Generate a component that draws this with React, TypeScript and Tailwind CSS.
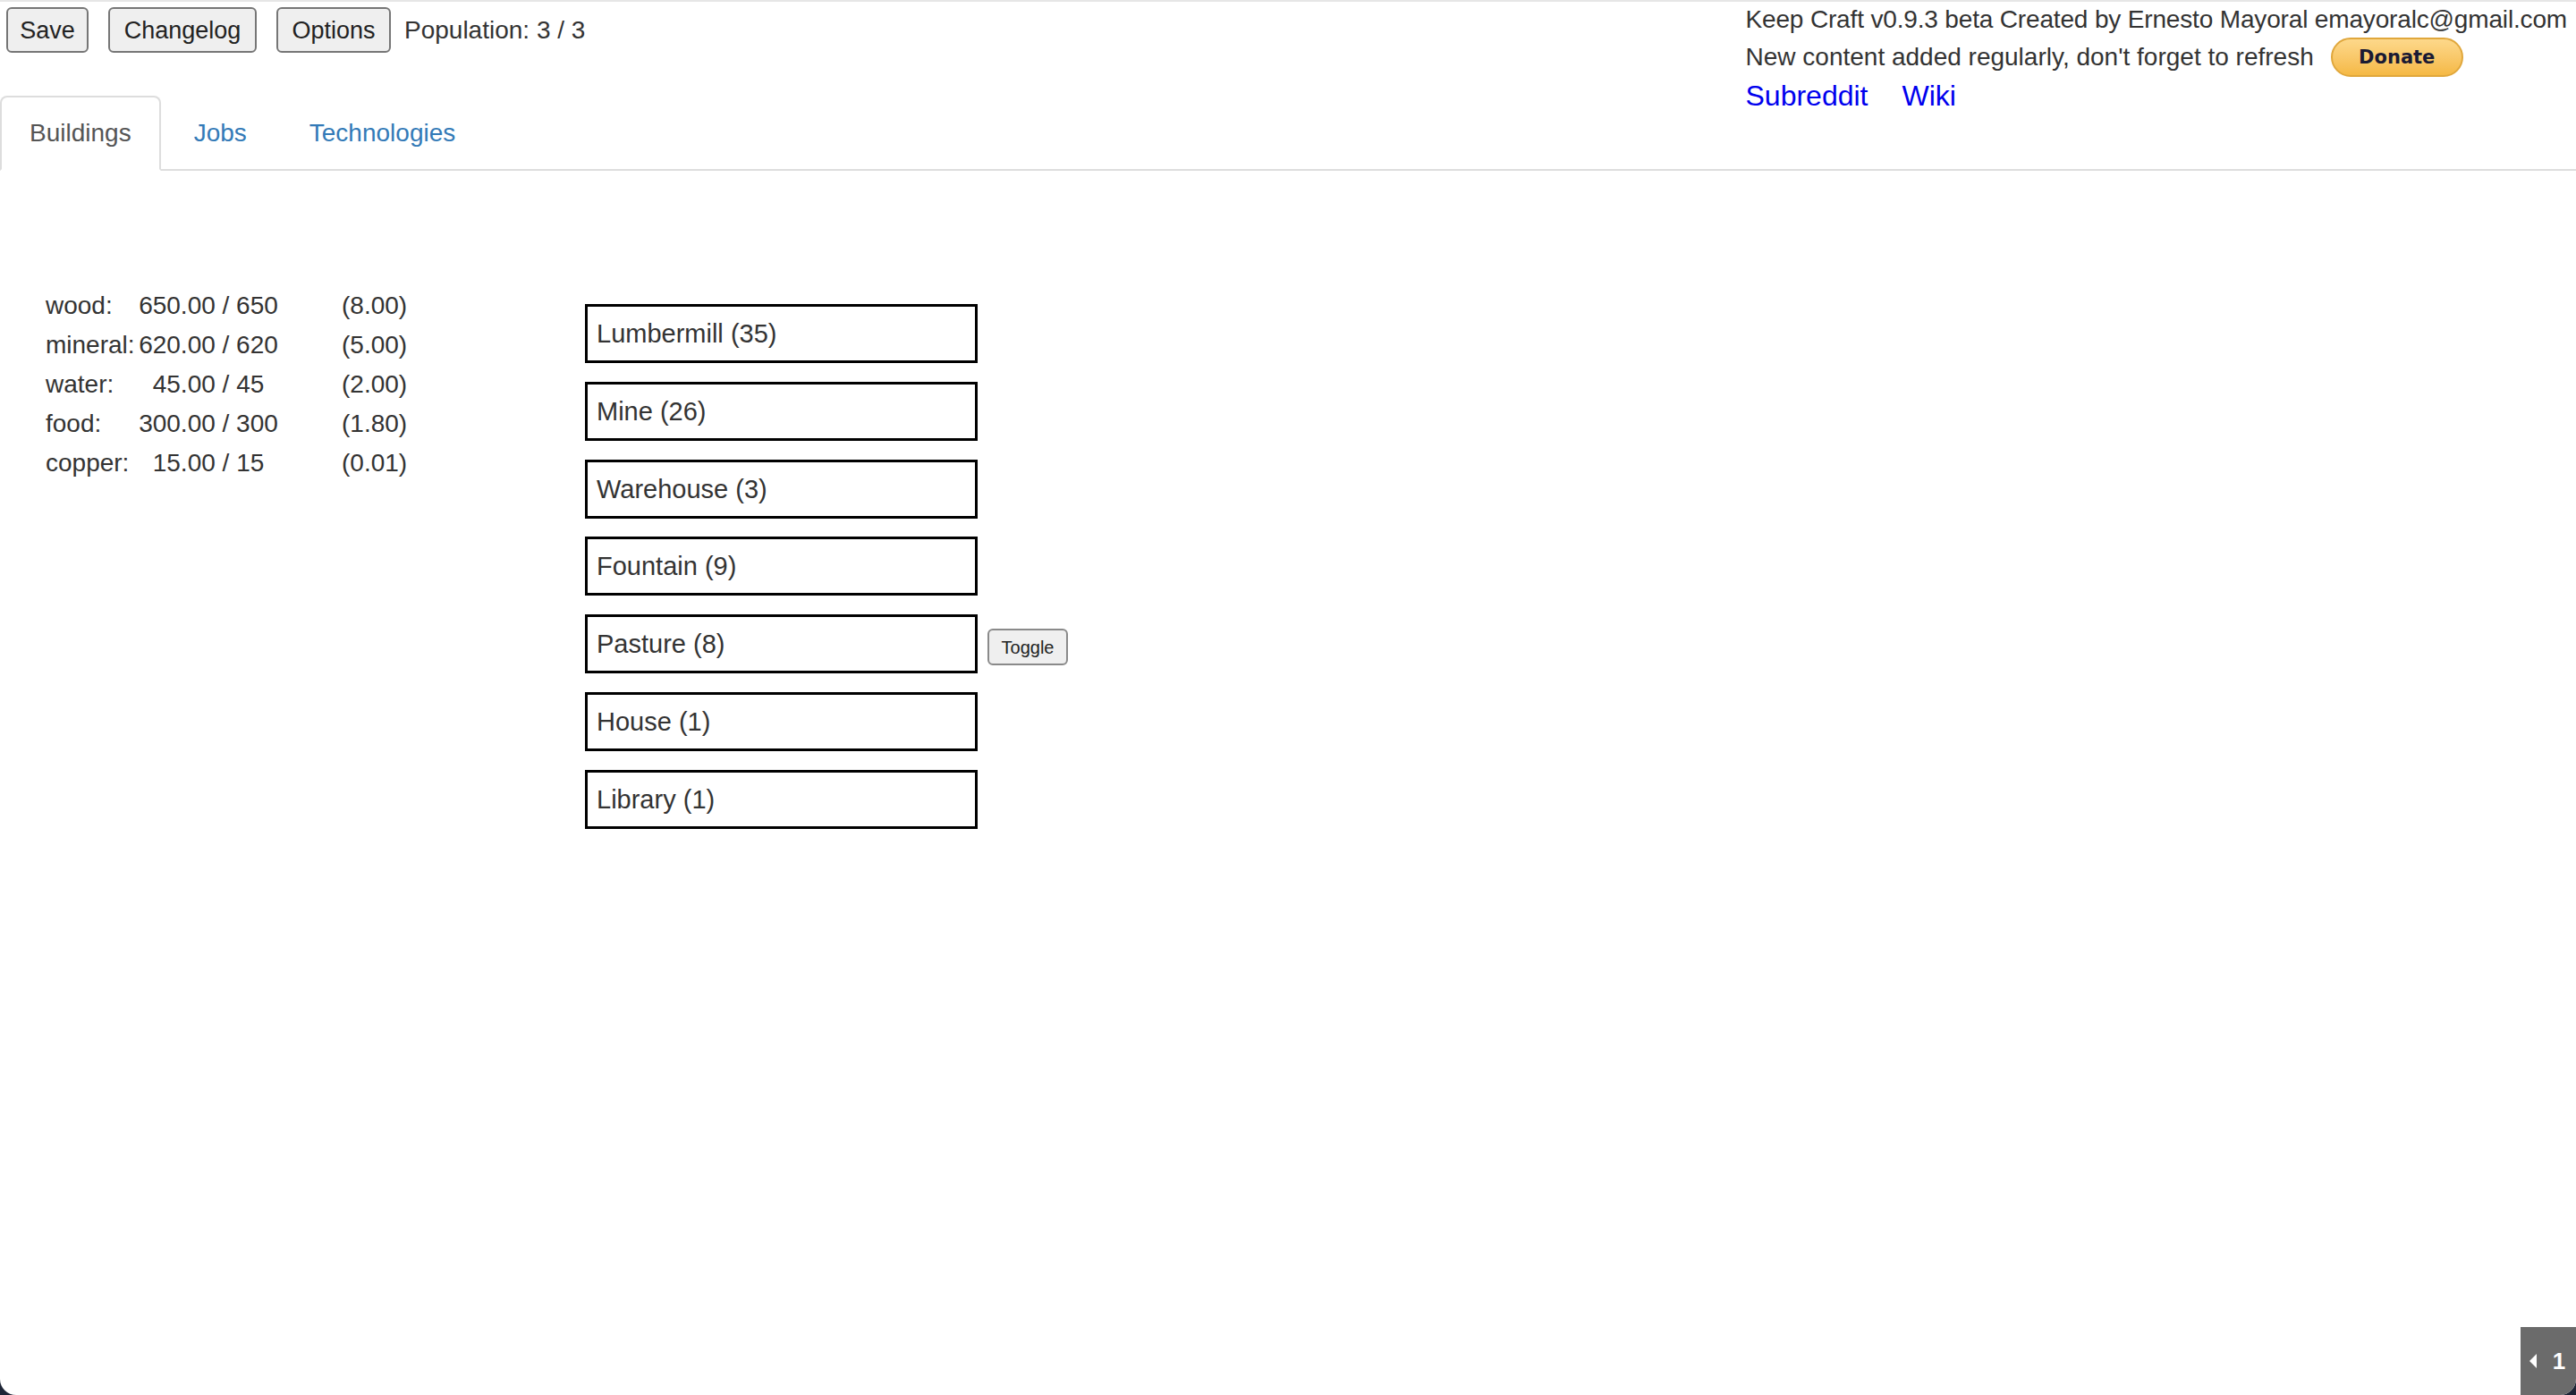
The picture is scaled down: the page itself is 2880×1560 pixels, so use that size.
import { useState } from "react";

type Resource = {
  name: string;
  amount: string;
  rate: string;
};

const resources: Resource[] = [
  { name: "wood:", amount: "650.00 / 650", rate: "(8.00)" },
  { name: "mineral:", amount: "620.00 / 620", rate: "(5.00)" },
  { name: "water:", amount: "45.00 / 45", rate: "(2.00)" },
  { name: "food:", amount: "300.00 / 300", rate: "(1.80)" },
  { name: "copper:", amount: "15.00 / 15", rate: "(0.01)" },
];

const buildings = [
  { name: "Lumbermill", count: 35 },
  { name: "Mine", count: 26 },
  { name: "Warehouse", count: 3 },
  { name: "Fountain", count: 9 },
  { name: "Pasture", count: 8, toggle: true },
  { name: "House", count: 1 },
  { name: "Library", count: 1 },
];

const tabs = ["Buildings", "Jobs", "Technologies"];

function TopButton({ label, width }: { label: string; width: string }) {
  return (
    <button
      className={
        "h-[51px] rounded-[6px] border-2 border-[#767676] bg-[#efefef] text-center text-[27px] leading-[40px] text-[#222] " +
        width
      }
    >
      {label}
    </button>
  );
}

function DonateButton() {
  return (
    <button className="ml-[19px] flex h-[44px] w-[148px] items-center justify-center rounded-full border-2 border-[#e0a73c] bg-gradient-to-b from-[#fdd88a] to-[#f5b944] font-['DejaVu_Sans',Verdana,sans-serif] text-[21px] font-bold leading-none text-[#1a1a33]">
      Donate
    </button>
  );
}

export default function App() {
  const [active, setActive] = useState("Buildings");

  return (
    <div className="h-[1560px] bg-[#1e2536]">
      <div className="relative h-full overflow-hidden rounded-b-[18px] border-t-2 border-[#e6e6e6] bg-white font-['Liberation_Sans',Arial,sans-serif] text-[28px] leading-[40px] text-[#333]">
        {/* header: game controls on the left, credits on the right */}
        <div className="flex h-[105px] items-start justify-between pr-[10px]">
          <div className="flex items-center gap-[22px] pl-[7px] pt-[6px]">
            <TopButton label="Save" width="w-[92px]" />
            <TopButton label="Changelog" width="w-[166px]" />
            <div className="flex items-center gap-[15px]">
              <TopButton label="Options" width="w-[128px]" />
              <span>Population: 3 / 3</span>
            </div>
          </div>

          <div className="whitespace-nowrap">
            <div className="h-[40px] tracking-[-0.16px]">
              Keep Craft v0.9.3 beta Created by Ernesto Mayoral emayoralc@gmail.com
            </div>
            <div className="flex h-[44px] items-center">
              <span>New content added regularly, don't forget to refresh</span>
              <DonateButton />
            </div>
            <div className="mt-[1px] flex gap-[38px] text-[32px] leading-[40px] text-[#0000ee]">
              <a href="#">Subreddit</a>
              <a href="#">Wiki</a>
            </div>
          </div>
        </div>

        {/* tabs */}
        <ul className="flex border-b-2 border-[#ddd]">
          {tabs.map((t) => (
            <li key={t} className="-mb-[2px] mr-[4px]">
              <a
                href="#"
                onClick={(e) => {
                  e.preventDefault();
                  setActive(t);
                }}
                className={
                  "block rounded-t-[8px] border-2 px-[31px] py-[20px] leading-[40px] " +
                  (active === t
                    ? "border-[#ddd] border-b-transparent bg-white text-[#555]"
                    : "border-transparent text-[#337ab7]")
                }
              >
                {t}
              </a>
            </li>
          ))}
        </ul>

        {/* resources + buildings */}
        <div className="flex items-start pl-[51px] pt-[129px]">
          <div className="grid w-[603px] grid-cols-[103px_158px_auto] content-start">
            {resources.map((r) => (
              <div key={r.name} className="contents leading-[44px]">
                <span className="whitespace-nowrap">{r.name}</span>
                <span className="whitespace-nowrap text-center">{r.amount}</span>
                <span className="pl-[70px]">{r.rate}</span>
              </div>
            ))}
          </div>

          <div className="mt-[20px] flex flex-col gap-[20.8px]">
            {buildings.map((b) => (
              <div key={b.name} className="flex items-center gap-[11px]">
                <button className="h-[66px] w-[439px] border-[3px] border-black bg-white pl-[10px] text-left text-[29px] text-[#333]">
                  {b.name} ({b.count})
                </button>
                {b.toggle && (
                  <button className="mt-[7px] h-[41px] w-[90px] rounded-[6px] border-2 border-[#8a8a8a] bg-[#efefef] text-[20px] leading-none text-[#222]">
                    Toggle
                  </button>
                )}
              </div>
            ))}
          </div>
        </div>

        {/* floating page counter in the corner */}
        <div className="absolute bottom-0 right-0 flex h-[76px] w-[62px] items-center justify-center gap-[18px] bg-[#6b6b6b] pr-[2px] text-white">
          <svg width="8" height="16" viewBox="0 0 8 16" className="fill-white">
            <path d="M8 0 L0 8 L8 16 Z" />
          </svg>
          <span className="text-[26px] font-bold leading-none">1</span>
        </div>
      </div>
    </div>
  );
}
